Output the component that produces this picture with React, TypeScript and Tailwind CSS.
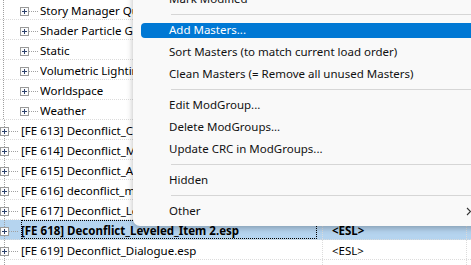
import React from "react";

type Row = { level: 0 | 1; text: string; col2?: string; selected?: boolean };

const rows: Row[] = [
  { level: 1, text: "Story Manager Quest Nodes" },
  { level: 1, text: "Shader Particle Geometry" },
  { level: 1, text: "Static" },
  { level: 1, text: "Volumetric Lighting" },
  { level: 1, text: "Worldspace" },
  { level: 1, text: "Weather" },
  { level: 0, text: "[FE 613] Deconflict_Clothing.esp", col2: "<ESL>" },
  { level: 0, text: "[FE 614] Deconflict_Misc.esp", col2: "<ESL>" },
  { level: 0, text: "[FE 615] Deconflict_Armor.esp", col2: "<ESL>" },
  { level: 0, text: "[FE 616] deconflict_magic.esp", col2: "<ESL>" },
  { level: 0, text: "[FE 617] Deconflict_Leveled_Item.esp", col2: "<ESL>" },
  { level: 0, text: "[FE 618] Deconflict_Leveled_Item 2.esp", col2: "<ESL>", selected: true },
  { level: 0, text: "[FE 619] Deconflict_Dialogue.esp", col2: "<ESL>" },
  { level: 0, text: "[FE 61A] Deconflict_Races.esp", col2: "<ESL>" },
];

function TreeGlyph({ level }: { level: 0 | 1 }) {
  const bx = level === 1 ? 20 : 0;
  const w = level === 1 ? 40 : 21;
  const vx = level === 1 ? 3.5 : 4.5;
  return (
    <svg width={w} height={19} className="shrink-0" viewBox={`0 0 ${w} 19`}>
      <line x1={vx} y1={0} x2={vx} y2={19} stroke="#a0a0a0" strokeDasharray="1 1" />
      <line x1={bx + 9} y1={11.5} x2={bx + 18} y2={11.5} stroke="#a0a0a0" strokeDasharray="1 1" />
      <rect x={bx + 0.5} y={7.5} width={8} height={8} fill="#fbfbfb" stroke="#9a9a9a" />
      <line x1={bx + 2} y1={11.5} x2={bx + 7} y2={11.5} stroke="#2a3f6a" />
      <line x1={bx + 4.5} y1={9} x2={bx + 4.5} y2={14} stroke="#2a3f6a" />
    </svg>
  );
}

function ListRow({ row }: { row: Row }) {
  return (
    <div
      className={`flex h-[20px] shrink-0 border-b border-dotted border-[#dcdcdc] ${
        row.selected ? "bg-[#b5d4ef] font-bold" : ""
      }`}
    >
      <div className="flex w-[323px] shrink-0 items-center border-r border-dotted border-[#dcdcdc]">
        <TreeGlyph level={row.level} />
        <div
          className={`flex h-full flex-1 items-center overflow-hidden whitespace-nowrap pt-[3px] ${
            row.selected ? "mr-[5px] border border-dotted border-black" : ""
          }`}
        >
          <span className={row.selected ? "-ml-px" : ""}>{row.text}</span>
        </div>
      </div>
      <div className="flex w-[144px] shrink-0 items-center whitespace-nowrap border-r border-dotted border-[#dcdcdc] pl-[9px] pt-[3px]">
        {row.col2 ?? ""}
      </div>
      <div className="flex-1" />
    </div>
  );
}

type MenuItem = { kind: "item"; label: string; hl?: boolean; sub?: boolean } | { kind: "sep" };

const menu: MenuItem[] = [
  { kind: "item", label: "Mark Modified" },
  { kind: "sep" },
  { kind: "item", label: "Add Masters...", hl: true },
  { kind: "item", label: "Sort Masters (to match current load order)" },
  { kind: "item", label: "Clean Masters (= Remove all unused Masters)" },
  { kind: "sep" },
  { kind: "item", label: "Edit ModGroup..." },
  { kind: "item", label: "Delete ModGroups..." },
  { kind: "item", label: "Update CRC in ModGroups..." },
  { kind: "sep" },
  { kind: "item", label: "Hidden" },
  { kind: "sep" },
  { kind: "item", label: "Other", sub: true },
];

function ContextMenu() {
  return (
    <div className="absolute left-[133px] top-[-16px] flex w-[360px] flex-col rounded-[7px] bg-[#f9f9f9] py-[4px] text-[11.5px] text-[#111] shadow-[0_2px_6px_rgba(0,0,0,0.28)]">
      {menu.map((m, i) =>
        m.kind === "sep" ? (
          <div key={i} className="flex h-[9px] items-center pl-[38px] pr-[4px]">
            <div className="h-px flex-1 bg-[#d6d6d6]" />
          </div>
        ) : m.hl ? (
          <div key={i} className="flex h-[22px] flex-col px-[8px] pt-[4px] pb-[3px]">
            <div className="flex flex-1 items-center whitespace-nowrap rounded-[4px] bg-[#0078d4] pl-[28px] text-white">
              <span className="-mt-[1px]">{m.label}</span>
            </div>
          </div>
        ) : (
          <div key={i} className="relative flex h-[22px] items-center whitespace-nowrap pl-[36px]">
            <span>{m.label}</span>
            {m.sub && (
              <svg width="6" height="9" viewBox="0 0 6 9" className="absolute left-[333px] top-[7px]">
                <path d="M1 1 L4.5 4.5 L1 8" fill="none" stroke="#333" strokeWidth="1.1" />
              </svg>
            )}
          </div>
        )
      )}
    </div>
  );
}

export default function App() {
  return (
    <div className="relative h-[265px] w-[471px] overflow-hidden bg-white font-['Segoe_UI','Noto_Sans',sans-serif] text-[11.5px] leading-none text-black">
      <div className="flex flex-col">
        {rows.map((r, i) => (
          <ListRow key={i} row={r} />
        ))}
      </div>
      <ContextMenu />
    </div>
  );
}
